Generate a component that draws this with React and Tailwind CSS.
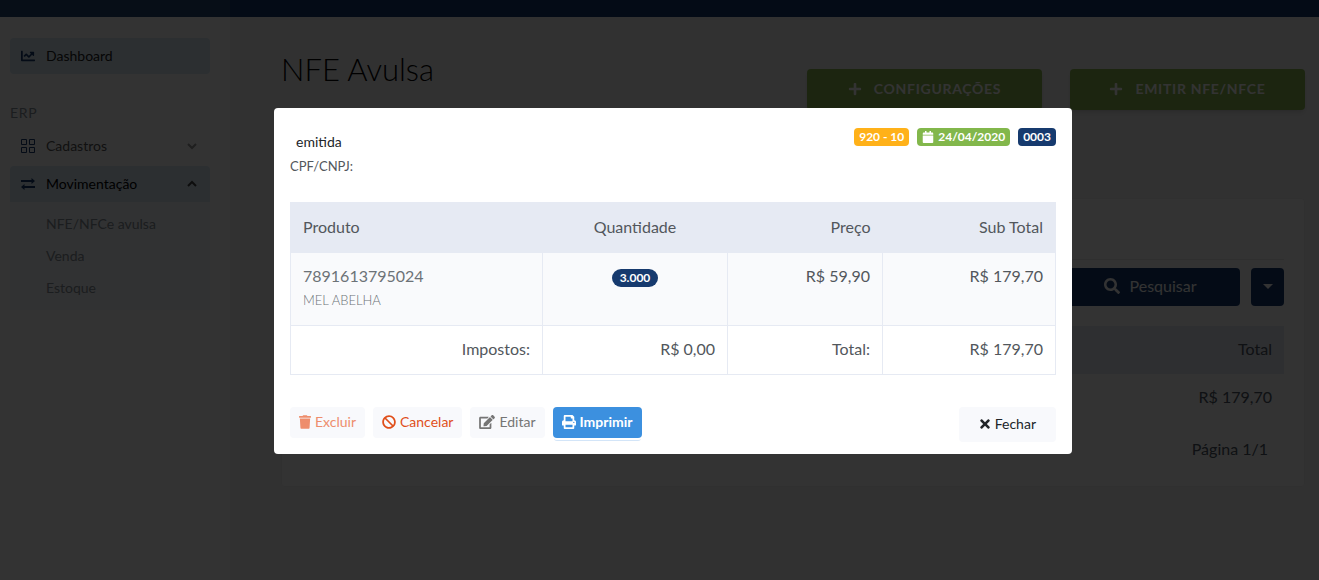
import React, { useState } from "react";
import {
  FaBan,
  FaCalendar,
  FaChartLine,
  FaEdit,
  FaPlus,
  FaPrint,
  FaSearch,
  FaTimes,
  FaTrash,
} from "react-icons/fa";

const GridIcon = () => (
  <svg viewBox="0 0 16 16" className="w-4 h-4" fill="none" stroke="#163a6e">
    <path d="M1.5 1.5h5v5h-5zM9.5 1.5h5v5h-5zM1.5 9.5h5v5h-5zM9.5 9.5h5v5h-5z" />
  </svg>
);

const ArrowsIcon = () => (
  <svg viewBox="0 0 16 16" className="w-4 h-4" fill="#163a6e">
    <path d="M1 4h10.500V2l3.500 3-3.500 3V6H1zM15 10H4.500V8L1 11l3.500 3v-2H15z" />
  </svg>
);

const Chevron = ({ up }) => (
  <svg
    viewBox="0 0 10 10"
    className="w-[10px] h-[10px] ml-auto"
    fill="none"
    stroke={up ? "#444" : "#999"}
    strokeWidth="2"
  >
    <path d={up ? "M1 7l4-4 4 4" : "M1 3l4 4 4-4"} />
  </svg>
);

const Sidebar = () => (
  <aside className="w-[230px] shrink-0 bg-white px-[10px] pr-5 pt-[21px] text-sm">
    <a href="#dashboard" className="flex items-center gap-[10px] h-9 px-[10px] rounded bg-[#d9eaf5] text-[#222]">
      <FaChartLine className="w-4 text-[#163a6e]" />
      Dashboard
    </a>
    <p className="mt-[29px] mb-[5px] leading-5 tracking-wider text-[#869099]">ERP</p>
    <a href="#cadastros" className="flex items-center gap-[10px] h-9 pl-[10px] pr-[13px] text-[#575757]">
      <GridIcon />
      Cadastros
      <Chevron />
    </a>
    <a href="#movimentacao" className="mt-[2px] flex items-center gap-[10px] h-9 pl-[10px] pr-[13px] rounded-t bg-[#d9eaf5] text-black">
      <ArrowsIcon />
      Movimentação
      <Chevron up />
    </a>
    <nav className="flex flex-col bg-[#f6f9fc] pl-9 pt-[6px] pb-[6px] text-[#869099]">
      <a href="#nfe" className="leading-8">NFE/NFCe avulsa</a>
      <a href="#venda" className="leading-8">Venda</a>
      <a href="#estoque" className="leading-8">Estoque</a>
    </nav>
  </aside>
);

const GreenButton = ({ children }) => (
  <button className="flex items-center justify-center gap-3 w-[235px] h-[41px] pb-[2px] rounded bg-[#8bb84f] text-white text-sm font-bold tracking-wider uppercase shadow-md">
    <FaPlus />
    {children}
  </button>
);

const Content = () => (
  <main className="flex-1 bg-[#f5f5f5] pl-[51px] pr-[14px]">
    <div className="flex justify-between">
      <h1 className="mt-[30px] text-[31px] leading-11 font-light text-black">NFE Avulsa</h1>
      <div className="flex gap-7 mt-[52px]">
        <GreenButton>Configurações</GreenButton>
        <GreenButton>Emitir NFE/NFCE</GreenButton>
      </div>
    </div>
    <section className="mt-[88px] h-[289px] rounded bg-white border border-[#f0f0f0] px-5 pt-15">
      <div className="flex justify-end gap-[11px] border-t border-[#e8e8e8] pt-2">
        <button className="flex items-center justify-center gap-[10px] w-[180px] h-[38px] pb-[2px] rounded bg-[#163a6e] text-white">
          <FaSearch />
          Pesquisar
        </button>
        <button aria-label="Mais opções" className="flex items-center justify-center w-[33px] h-[38px] pb-[2px] rounded bg-[#163a6e]">
          <svg viewBox="0 0 10 5" className="w-[10px] h-[5px]" fill="white">
            <path d="M0 0h10L5 5z" />
          </svg>
        </button>
      </div>
      <table className="w-full mt-5 text-right">
        <thead>
          <tr className="bg-[#e6eaf2] text-[#4b5563]">
            <th className="h-12 px-3 pb-[2px] font-normal">Total</th>
          </tr>
        </thead>
        <tbody>
          <tr className="bg-[#fcfcfc] text-[#4b5563]">
            <td className="h-12 px-3 pb-[2px]">R$ 179,70</td>
          </tr>
        </tbody>
      </table>
      <p className="mt-[15px] pr-4 text-right text-[#4b5563]">Página 1/1</p>
    </section>
  </main>
);

const ProductTable = () => (
  <table className="w-full mt-6 table-fixed border-collapse text-right text-[#52575c]">
    <colgroup>
      <col className="w-[252px]" />
      <col className="w-[185px]" />
      <col className="w-[155px]" />
      <col />
    </colgroup>
    <thead>
      <tr className="h-[50px] bg-[#e6eaf3] border border-[#e6eaf3]">
        <th className="px-3 pb-[2px] font-normal text-left">Produto</th>
        <th className="px-3 pb-[2px] font-normal text-center">Quantidade</th>
        <th className="px-3 pb-[2px] font-normal">Preço</th>
        <th className="px-3 pb-[2px] font-normal">Sub Total</th>
      </tr>
    </thead>
    <tbody>
      <tr className="h-[73px] bg-[#f9fafc] align-top">
        <td className="border border-[#e6eaf3] px-3 pt-[11px] text-left text-[#6c7277]">
          7891613795024
          <p className="text-[13px] leading-6 font-light">MEL ABELHA</p>
        </td>
        <td className="border border-[#e6eaf3] px-3 pt-[11px] text-center">
          <span className="inline-block mt-1 px-2 rounded-full bg-[#163a6e] text-white text-xs leading-[18px] font-bold">
            3.000
          </span>
        </td>
        <td className="border border-[#e6eaf3] px-3 pt-[11px]">R$ 59,90</td>
        <td className="border border-[#e6eaf3] px-3 pt-[11px]">R$ 179,70</td>
      </tr>
      <tr className="h-[49px]">
        <td className="border border-[#e6eaf3] px-3 pb-[2px]">Impostos:</td>
        <td className="border border-[#e6eaf3] px-3 pb-[2px]">R$ 0,00</td>
        <td className="border border-[#e6eaf3] px-3 pb-[2px]">Total:</td>
        <td className="border border-[#e6eaf3] px-3 pb-[2px]">R$ 179,70</td>
      </tr>
    </tbody>
  </table>
);

const Modal = ({ onClose }) => (
  <div className="fixed inset-0 flex items-start justify-center bg-black/80 pl-[27px] pt-27">
    <div role="dialog" aria-label="Nota emitida" className="w-full max-w-[798px] rounded bg-white px-4 pt-5 pb-3">
      <div className="flex justify-between items-start">
        <div>
          <h2 className="pl-[6px] pt-[2px] text-sm leading-6 text-[#212529]">emitida</h2>
          <p className="text-[13px] leading-6 text-[#52575c]">CPF/CNPJ:</p>
        </div>
        <div className="flex gap-2 text-xs leading-[18px] font-bold text-white">
          <span className="rounded bg-[#ffb119] px-[5px]">920 - 10</span>
          <span className="flex items-center gap-1 rounded bg-[#82b74b] px-[5px]">
            <FaCalendar />
            24/04/2020
          </span>
          <span className="rounded bg-[#163a6e] px-[5px]">0003</span>
        </div>
      </div>
      <ProductTable />
      <div className="mt-8 flex items-start gap-2 text-sm">
        <button className="flex items-center gap-1 h-[31px] px-[9px] pb-[2px] rounded bg-[#f8f9fc] text-[#ee8d6c]">
          <FaTrash className="w-3" />
          Excluir
        </button>
        <button className="flex items-center gap-1 h-[31px] px-[9px] pb-[2px] rounded bg-[#f8f9fc] text-[#e04f1a]">
          <FaBan />
          Cancelar
        </button>
        <button className="flex items-center gap-1 h-[31px] px-[9px] pb-[2px] rounded bg-[#f8f9fc] text-[#757575]">
          <FaEdit className="w-4" />
          Editar
        </button>
        <button className="flex items-center gap-1 h-[31px] px-[9px] pb-[2px] rounded bg-[#3c90df] text-white font-bold shadow-[0_2px_0_white,0_4px_0_-1px_#d3e5f8]">
          <FaPrint />
          Imprimir
        </button>
        <button
          className="ml-auto flex items-center gap-1 h-[35px] px-5 pb-[2px] rounded bg-[#f8f9fc] text-[#212529]"
          onClick={onClose}
        >
          <FaTimes className="w-3" />
          Fechar
        </button>
      </div>
    </div>
  </div>
);

const App = () => {
  const [open, setOpen] = useState(true);

  return (
    <div className="flex flex-col min-h-screen font-['Lato',sans-serif]">
      <header className="flex h-[17px] bg-[#163a6e]">
        <div className="w-[230px] bg-[#234673]" />
      </header>
      <div className="flex flex-1">
        <Sidebar />
        <Content />
      </div>
      {open && <Modal onClose={() => setOpen(false)} />}
    </div>
  );
};

export default App;
